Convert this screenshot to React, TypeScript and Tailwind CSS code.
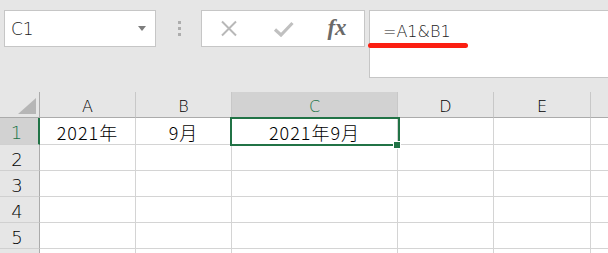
import React from "react";

const columns = [
  { name: "A", width: "w-[96px]" },
  { name: "B", width: "w-[96px]" },
  { name: "C", width: "w-[166px]" },
  { name: "D", width: "w-[96px]" },
  { name: "E", width: "w-[97px]" },
  { name: "", width: "w-[96px]" },
];

const rows: Record<number, Record<string, string>> = {
  1: { A: "2021年", B: "9月", C: "2021年9月" },
};

function CornerTriangle() {
  return (
    <svg width="18" height="16" viewBox="0 0 18 16" className="absolute right-[3px] bottom-[3px]">
      <polygon points="18,0 18,16 0,16" fill="#b6b6b6" />
    </svg>
  );
}

function FormulaBar() {
  return (
    <div className="flex h-[92px] items-start pt-[10px]">
      <div className="ml-[4px] flex h-[37px] w-[152px] items-start justify-between border border-[#c6c6c6] bg-white pl-[6px] pr-[9px]">
        <span className="pt-[10px] text-[17px] leading-none font-light text-[#222]">C1</span>
        <svg width="8" height="5" viewBox="0 0 8 5" className="mt-[15px]">
          <polygon points="0,0 8,0 4,5" fill="#7d7d7d" />
        </svg>
      </div>

      <div className="flex h-[37px] w-[45px] flex-col items-center justify-center gap-[3px] pl-[1px]">
        <span className="h-[3px] w-[3px] bg-[#adadad]" />
        <span className="h-[3px] w-[3px] bg-[#adadad]" />
        <span className="h-[3px] w-[3px] bg-[#adadad]" />
      </div>

      <div className="grid h-[37px] w-[164px] grid-cols-3 items-center border border-[#c6c6c6] bg-white">
        <div className="flex justify-center">
          <svg width="18" height="17" viewBox="0 0 18 17">
            <path d="M2 1.5 L16 15.5 M16 1.5 L2 15.5" stroke="#b8b8b8" strokeWidth="2" />
          </svg>
        </div>
        <div className="flex justify-center">
          <svg width="21" height="16" viewBox="0 0 21 16">
            <path d="M2 8.5 L8 14 L19.5 2" stroke="#c0c0c0" strokeWidth="3.2" fill="none" />
          </svg>
        </div>
        <div className="flex justify-center pb-[2px]">
          <span className="font-['Liberation_Serif',serif] text-[23px] leading-none font-bold italic text-[#6a6a6a]">
            fx
          </span>
        </div>
      </div>

      <div className="relative ml-[4px] h-[68px] flex-1 border-y border-l border-[#c6c6c6] bg-white pt-[9px] pl-[13px]">
        <span className="text-[16px] leading-none font-light text-[#222]">=A1&amp;B1</span>
        <div className="absolute top-[32px] left-[-2px] h-[5px] w-[100px] rounded-full bg-[#fb1f12]" />
      </div>
    </div>
  );
}

function HeaderRow() {
  return (
    <div className="flex h-[26px]">
      <div className="relative h-full w-[40px] shrink-0 border-r border-b border-[#ababab] bg-[#e6e6e6]">
        <CornerTriangle />
      </div>
      {columns.map((col, i) => (
        <div
          key={i}
          className={`${col.width} flex h-full shrink-0 justify-center border-r border-b border-r-[#c8c8c8] border-b-[#ababab] pt-[7px] text-[16px] leading-none font-light ${
            col.name === "C" ? "bg-[#d2d2d2] text-[#217346]" : "bg-[#e6e6e6] text-black"
          }`}
        >
          {col.name}
        </div>
      ))}
    </div>
  );
}

function Row({ n }: { n: number }) {
  const selected = n === 1;
  const data = rows[n] || {};
  return (
    <div className={`flex ${selected ? "h-[27px]" : "h-[26px]"}`}>
      <div
        className={`flex h-full w-[40px] shrink-0 justify-center border-b border-b-[#d0d0d0] pt-[6px] pr-[5px] text-[18px] leading-none font-light ${
          selected
            ? "border-r-2 border-r-[#217346] bg-[#d2d2d2] text-[#217346]"
            : "border-r border-r-[#ababab] bg-[#e6e6e6] text-black"
        }`}
      >
        {n < 6 ? n : ""}
      </div>
      {columns.map((col, i) => (
        <div
          key={i}
          className={`${col.width} relative flex h-full shrink-0 justify-center border-r border-b border-[#d4d4d4] bg-white pt-[5px] font-['Noto_Sans_CJK_JP',sans-serif] text-[18px] leading-none font-light tracking-[1px] text-black`}
        >
          {data[col.name] || ""}
          {selected && col.name === "C" && (
            <>
              <div className="absolute top-[-1px] left-[-2px] z-10 h-[29px] w-[170px] border-2 border-[#217346]" />
              <div className="absolute top-[23px] left-[161px] z-20 h-[8px] w-[8px] border border-white bg-[#217346]" />
            </>
          )}
        </div>
      ))}
    </div>
  );
}

export default function App() {
  return (
    <div className="h-[253px] w-[608px] overflow-hidden bg-[#e6e6e6] font-['DejaVu_Sans','Noto_Sans_CJK_JP',sans-serif]">
      <FormulaBar />
      <HeaderRow />
      {[1, 2, 3, 4, 5, 6].map((n) => (
        <Row key={n} n={n} />
      ))}
    </div>
  );
}
